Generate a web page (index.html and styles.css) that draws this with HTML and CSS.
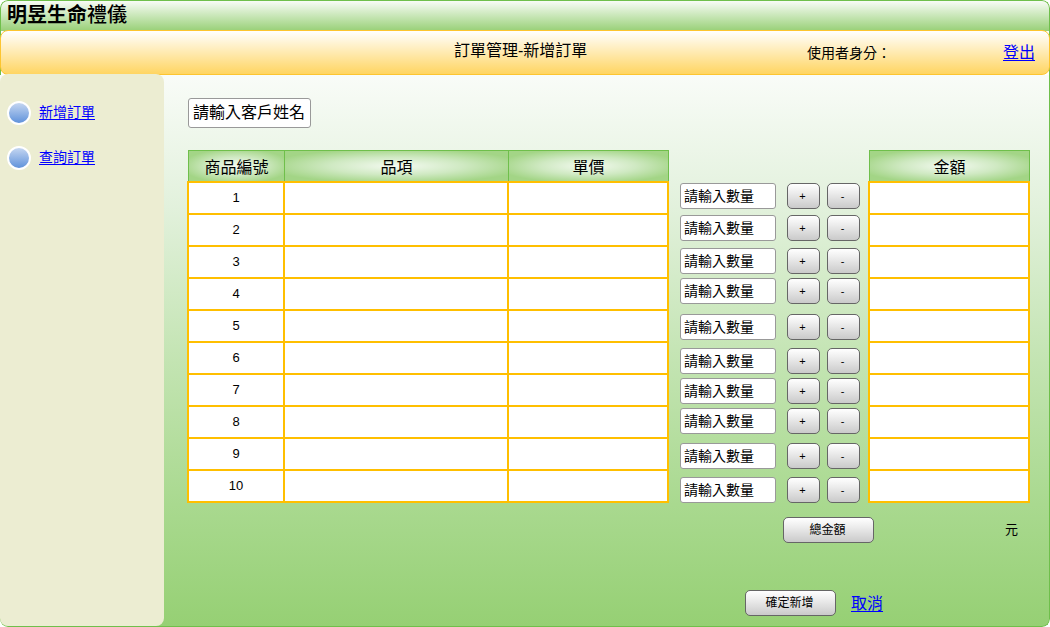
FILE: index.html
```
<!DOCTYPE html>
<html lang="zh-Hant">
<head>
<meta charset="utf-8">
<title>訂單管理-新增訂單</title>
<link rel="stylesheet" href="styles.css">
</head>
<body>
<div class="app">
  <header class="brand">明昱生命<span class="brand-light">禮儀</span></header>
  <div class="topbar">
    <h1 class="page-title">訂單管理-新增訂單</h1>
    <span class="user">使用者身分：</span>
    <a class="link logout" href="#">登出</a>
  </div>
  <div class="body">
    <nav class="sidebar">
      <div class="nav-item"><svg class="dot" viewBox="0 0 24 24"><defs><linearGradient id="ball" x1="0" y1="0" x2="0" y2="1"><stop offset="0" stop-color="#c9d9f2"/><stop offset="1" stop-color="#5b8fda"/></linearGradient></defs><circle cx="12" cy="12" r="11" fill="url(#ball)" stroke="#fff" stroke-width="2"/></svg><a class="link" href="#">新增訂單</a></div>
      <div class="nav-item"><svg class="dot" viewBox="0 0 24 24"><circle cx="12" cy="12" r="11" fill="url(#ball)" stroke="#fff" stroke-width="2"/></svg><a class="link" href="#">查詢訂單</a></div>
    </nav>
    <main class="main">
      <div class="field customer">請輸入客戶姓名</div>
      <div class="order">
        <section class="items">
          <div class="head"><span>商品編號</span><span>品項</span><span>單價</span></div>
          <div class="rows">
            <div class="row"><span>1</span><span></span><span></span></div>
            <div class="row"><span>2</span><span></span><span></span></div>
            <div class="row"><span>3</span><span></span><span></span></div>
            <div class="row"><span>4</span><span></span><span></span></div>
            <div class="row"><span>5</span><span></span><span></span></div>
            <div class="row"><span>6</span><span></span><span></span></div>
            <div class="row"><span>7</span><span></span><span></span></div>
            <div class="row"><span>8</span><span></span><span></span></div>
            <div class="row"><span>9</span><span></span><span></span></div>
            <div class="row"><span>10</span><span></span><span></span></div>
          </div>
        </section>
        <section class="quantities">
          <div class="qty"><div class="field">請輸入數量</div><button class="btn">+</button><button class="btn">-</button></div>
          <div class="qty"><div class="field">請輸入數量</div><button class="btn">+</button><button class="btn">-</button></div>
          <div class="qty"><div class="field">請輸入數量</div><button class="btn">+</button><button class="btn">-</button></div>
          <div class="qty"><div class="field">請輸入數量</div><button class="btn">+</button><button class="btn">-</button></div>
          <div class="qty"><div class="field">請輸入數量</div><button class="btn">+</button><button class="btn">-</button></div>
          <div class="qty"><div class="field">請輸入數量</div><button class="btn">+</button><button class="btn">-</button></div>
          <div class="qty"><div class="field">請輸入數量</div><button class="btn">+</button><button class="btn">-</button></div>
          <div class="qty"><div class="field">請輸入數量</div><button class="btn">+</button><button class="btn">-</button></div>
          <div class="qty"><div class="field">請輸入數量</div><button class="btn">+</button><button class="btn">-</button></div>
          <div class="qty"><div class="field">請輸入數量</div><button class="btn">+</button><button class="btn">-</button></div>
        </section>
        <section class="amounts">
          <div class="head"><span>金額</span></div>
          <div class="rows">
            <div class="row"><span></span></div>
            <div class="row"><span></span></div>
            <div class="row"><span></span></div>
            <div class="row"><span></span></div>
            <div class="row"><span></span></div>
            <div class="row"><span></span></div>
            <div class="row"><span></span></div>
            <div class="row"><span></span></div>
            <div class="row"><span></span></div>
            <div class="row"><span></span></div>
          </div>
        </section>
      </div>
      <div class="total"><button class="btn wide">總金額</button><span class="unit">元</span></div>
      <div class="actions"><button class="btn wide">確定新增</button><a class="link cancel" href="#">取消</a></div>
    </main>
  </div>
</div>
</body>
</html>
```
FILE: styles.css
```
* { box-sizing: border-box; }
body {
  margin: 0;
  background: #fff;
  color: #000;
  font-family: "Liberation Sans", "Noto Sans CJK TC", sans-serif;
  font-size: 14px;
}
.app {
  width: 1050px;
  height: 627px;
  display: flex;
  flex-direction: column;
  border-radius: 8px;
  overflow: hidden;
  background:
    linear-gradient(#6fbf4b, #6fbf4b) 0 30px / 1px 50px no-repeat,
    linear-gradient(#6fbf4b, #6fbf4b) 1049px 30px / 1px 50px no-repeat,
    #fff;
}
.brand {
  height: 31px;
  padding-left: 6px;
  border: 1px solid #6fbf4b;
  border-bottom: 0;
  border-radius: 8px 8px 0 0;
  background: linear-gradient(#f8fcf6, #98d077);
  font-size: 20px;
  line-height: 29px;
  font-weight: 700;
}
.brand-light { font-weight: 500; }
.topbar {
  height: 45px;
  flex: none;
  margin-top: -1px;
  display: flex;
  align-items: center;
  border: 1px solid #fdc530;
  border-radius: 8px;
  background: linear-gradient(#fff, #ffd562);
}
.page-title {
  width: 353px;
  margin: 0 0 3px 453px;
  font-size: 16px;
  line-height: 20px;
  font-weight: 400;
}
.user { width: 196px; line-height: 20px; }
.logout { font-size: 16px; line-height: 20px; }
.link { color: #00f; text-decoration: underline; text-decoration-thickness: 1px; text-underline-offset: 2px; }
.body {
  flex: 1;
  min-height: 0;
  display: flex;
  border-right: 1px solid #6fbf4b;
  border-bottom: 1px solid #6fbf4b;
  border-radius: 0 0 8px 8px;
  background: linear-gradient(#f9fcf8, #e2f1dc 24%, #c3e4b2 52%, #a9d98f 78%, #96d074);
}
.sidebar {
  width: 164px;
  margin-top: -1px;
  padding: 27px 0 0 7px;
  background: #ecedd2;
  border-radius: 8px;
}
.nav-item { height: 24px; margin-bottom: 21px; display: flex; align-items: center; gap: 8px; line-height: 21px; }
.nav-item .link { margin-bottom: 1px; }
.dot { width: 24px; height: 24px; }
.main { width: 885px; padding: 23px 0 0 23px; }
.field {
  flex: none;
  height: 26px;
  width: 96px;
  border: 1px solid #999;
  border-radius: 3px;
  background: #fff;
  padding-left: 3px;
  line-height: 24px;
  white-space: nowrap;
}
.customer { width: 123px; height: 30px; margin: 0 0 22px 1px; padding-left: 4px; font-size: 16px; line-height: 28px; }
.order { display: flex; height: 353px; }
.items { width: 482px; }
.head { height: 31px; margin-left: 1px; display: flex; border-left: 1px solid #6fbf4b; border-top: 1px solid #6fbf4b; }
.head span {
  flex: none;
  border-right: 1px solid #6fbf4b;
  background: radial-gradient(ellipse farthest-side, #f4faf1, #cfe9c2 60%, #a3d586 115%);
  text-align: center;
  font-size: 16px;
  line-height: 33px;
}
.items .head span:nth-child(1), .items .row span:nth-child(1) { width: 96px; }
.items .head span:nth-child(2), .items .row span:nth-child(2) { width: 224px; }
.items .head span:nth-child(3), .items .row span:nth-child(3) { width: 160px; }
.rows { border-left: 2px solid #ffbf00; border-top: 2px solid #ffbf00; }
.row { display: flex; height: 32px; }
.row span {
  border-right: 2px solid #ffbf00;
  border-bottom: 2px solid #ffbf00;
  background: #fff;
  text-align: center;
  font-size: 13px;
  line-height: 30px;
}
.quantities { width: 188px; padding: 33px 0 0 11px; }
.qty { display: flex; height: 26px; margin-bottom: 4px; }
.qty:nth-child(1) { margin-bottom: 6px; }
.qty:nth-child(2) { margin-bottom: 7px; }
.qty:nth-child(4) { margin-bottom: 10px; }
.qty:nth-child(5), .qty:nth-child(9) { margin-bottom: 8px; }
.qty:nth-child(8) { margin-bottom: 9px; }
.qty .field { margin-right: 11px; }
.btn {
  flex: none;
  width: 33px;
  height: 26px;
  margin-right: 7px;
  padding: 0 2px 0 0;
  border: 1px solid #666;
  border-radius: 5px;
  background: linear-gradient(#fff, #f0f0f0 30%, #cacaca);
  color: #000;
  font-family: inherit;
  font-size: 12px;
  line-height: 22px;
}
.qty .btn { margin-right: 7px; font-size: 11px; }
.qty .btn:last-child { margin-right: 0; }
.amounts { width: 162px; margin-left: 11px; }
.amounts .head { margin-right: 0; }
.amounts .head span { width: 160px; }
.amounts .row span { width: 160px; }
.wide { width: 91px; margin: 0; }
.total { display: flex; margin: 14px 0 0 596px; }
.unit { margin-left: 131px; font-size: 13px; line-height: 25px; }
.actions { display: flex; margin: 47px 0 0 558px; }
.cancel { margin-left: 15px; font-size: 16px; line-height: 27px; }
```
